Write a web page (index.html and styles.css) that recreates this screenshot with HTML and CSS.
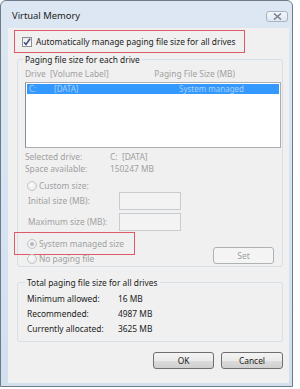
FILE: index.html
```html
<!DOCTYPE html>
<html>
<head>
<meta charset="utf-8">
<link rel="stylesheet" href="styles.css">
</head>
<body>
<div class="window">
  <div class="titlebar">
    <span class="title">Virtual Memory</span>
    <span class="close"><svg width="9" height="7" viewBox="0 0 9 7"><path d="M1 0.5 L8 6.5 M8 0.5 L1 6.5" stroke="#7a8594" stroke-width="1.6" fill="none"/></svg></span>
  </div>
  <div class="client">
    <div class="auto hl">
      <span class="checkbox"><svg width="8" height="8" viewBox="0 0 8 8"><path d="M1 4.2 L3 6.5 L7 0.8" stroke="#3e4f7c" stroke-width="1.5" fill="none"/></svg></span>
      <span>Automatically manage paging file size for all drives</span>
    </div>
    <fieldset class="group g1">
      <legend>Paging file size for each drive</legend>
      <div class="cols dis"><span>Drive&nbsp; [Volume Label]</span><span class="col2">Paging File Size (MB)</span></div>
      <div class="listbox">
        <div class="row sel"><span class="c1">C:</span><span class="c2">[DATA]</span><span class="c3">System managed</span></div>
      </div>
      <div class="info dis">
        <span>Selected drive:</span><span>C:&nbsp; [DATA]</span>
        <span>Space available:</span><span>150247 MB</span>
      </div>
      <div class="radio-line dis custom"><span class="radio"></span><span>Custom size:</span></div>
      <div class="field dis"><span>Initial size (MB):</span><span class="box"></span></div>
      <div class="field dis max"><span>Maximum size (MB):</span><span class="box"></span></div>
      <div class="bottom-row">
        <div class="radios">
          <div class="radio-line dis sysbox hl"><span class="radio on"></span><span>System managed size</span></div>
          <div class="radio-line dis nopage"><span class="radio"></span><span>No paging file</span></div>
        </div>
        <span class="btn disabled set">Set</span>
      </div>
    </fieldset>
    <fieldset class="group g2">
      <legend>Total paging file size for all drives</legend>
      <div class="totals">
        <span>Minimum allowed:</span><span>16 MB</span>
        <span>Recommended:</span><span>4987 MB</span>
        <span>Currently allocated:</span><span>3625 MB</span>
      </div>
    </fieldset>
    <div class="buttons">
      <span class="btn ok">OK</span>
      <span class="btn cancel">Cancel</span>
    </div>
  </div>
</div>
</body>
</html>
```
FILE: styles.css
```css
* { box-sizing: border-box; }
body {
  margin: 0;
  background: #fff;
  font-family: "Noto Sans", "Open Sans", sans-serif;
  font-size: 8.4px;
  line-height: 12px;
  color: #1c1c1c;
}
.window {
  width: 293px;
  height: 387px;
  border: 1px solid #6f7a88;
  border-radius: 6px 6px 0 0;
  background: linear-gradient(#dce7f3, #d2e0ee);
  display: flex;
  flex-direction: column;
}
.titlebar {
  height: 27px;
  display: flex;
  align-items: center;
  justify-content: space-between;
  padding: 3px 4px 0 11px;
}
.title {
  font-size: 9.4px;
  color: #222;
}
.close {
  width: 22px;
  height: 11px;
  border: 1px solid #a6b2c1;
  border-radius: 3px;
  background: linear-gradient(#f4f7fb, #dfe7f1);
  display: flex;
  align-items: center;
  justify-content: center;
}
.client {
  flex: 1;
  margin: 0 3px 3px 7px;
  background: #f0f0f0;
  padding-top: 2px;
}
.hl { border: 1.5px solid #de5a68; }
.auto {
  margin-left: 6px;
  width: 231px;
  height: 23px;
  display: flex;
  align-items: center;
  gap: 4px;
  padding-left: 7px;
}
.checkbox {
  width: 10px;
  height: 10px;
  border: 1px solid #8e8f8f;
  background: linear-gradient(#e9e9e9, #fdfdfd);
  display: flex;
  align-items: center;
  justify-content: center;
}
.dis { color: #a0a0a0; }
.group {
  margin: 0 0 0 9px;
  width: 266px;
  border: 1px solid #d5dfe5;
  border-radius: 3px;
  min-width: 0;
}
.group legend {
  padding: 0 2px;
  margin-left: -2px;
  line-height: 13px;
}
.g1 { padding: 2px 1px 1px 7px; }
.cols { display: flex; }
.col2 { margin-left: auto; margin-right: 46px; }
.listbox {
  margin-top: 2px;
  height: 66px;
  width: 256px;
  background: #fff;
  border: 1px solid #abadb3;
  border-left-color: #8a8d93;
  padding: 1px;
}
.row.sel {
  height: 10px;
  background: #3399ff;
  color: #a9d0f8;
  display: flex;
  line-height: 10px;
  font-size: 8px;
}
.c1 { width: 27px; padding-left: 2px; }
.c2 { width: 125px; }
.info {
  margin-top: 3px;
  display: grid;
  grid-template-columns: 85px auto;
}
.radio-line { display: flex; align-items: center; gap: 2px; }
.radio {
  width: 10px;
  height: 10px;
  border-radius: 50%;
  border: 1px solid #c3c6ca;
  background: radial-gradient(circle at 40% 40%, #fcfcfc, #e3e3e3);
  position: relative;
}
.radio.on::after {
  content: "";
  position: absolute;
  left: 2px; top: 2px;
  width: 4px; height: 4px;
  border-radius: 50%;
  background: #b5b9bd;
}
.custom { margin-top: 5px; padding-left: 2px; height: 12px; }
.field {
  display: flex;
  align-items: center;
  height: 18px;
  padding-left: 3px;
}
.field .box {
  margin-left: auto;
  margin-right: 100px;
  width: 62px;
  height: 18px;
  border: 1px solid #c8cbcf;
  background: #f3f3f3;
}
.field.max { margin-top: 3px; }
.bottom-row {
  display: flex;
  justify-content: space-between;
  align-items: flex-end;
  margin-top: 1px;
}
.sysbox {
  margin-left: -11px;
  width: 121px;
  height: 23px;
  padding-left: 12px;
}
.nopage { margin-top: -2px; padding-left: 2px; height: 12px; }
.btn {
  display: flex;
  align-items: center;
  justify-content: center;
  height: 17px;
  border: 1px solid #707070;
  border-radius: 3px;
  background: linear-gradient(#f3f3f3 0%, #ebebeb 50%, #dddddd 51%, #cfcfcf 100%);
  color: #1c1c1c;
}
.btn.disabled {
  border-color: #adb2b5;
  background: #f4f4f4;
  color: #a0a0a0;
}
.set { width: 61px; margin-right: 7px; margin-bottom: 1px; }
.g2 { margin-top: 9px; padding: 2px 1px 5px 9px; }
.totals {
  display: grid;
  grid-template-columns: 91px auto;
  line-height: 15px;
}
.buttons {
  display: flex;
  justify-content: flex-end;
  gap: 7px;
  margin: 10px 6px 0 0;
}
.ok { width: 61px; }
.cancel { width: 62px; }
```
